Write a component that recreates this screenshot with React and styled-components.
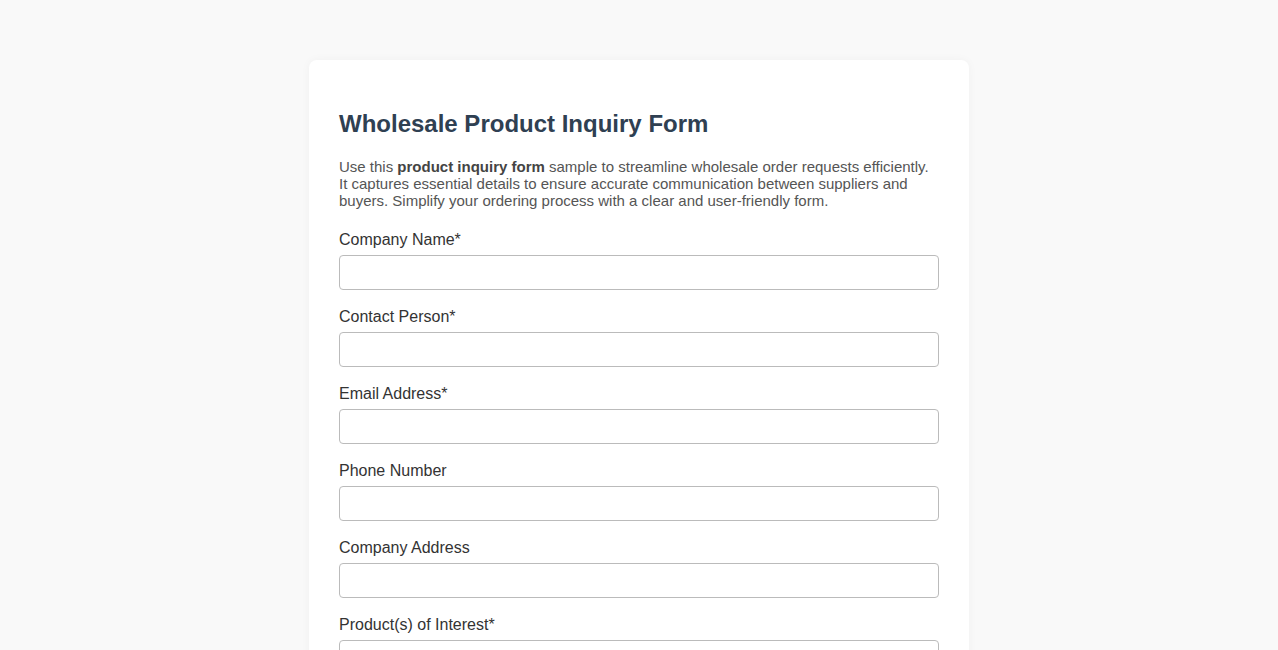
import React from 'react';
import styled, { createGlobalStyle } from 'styled-components';

const GlobalStyle = createGlobalStyle`
  body {
    margin: 0;
    background: #f9f9f9;
    font-family: "Liberation Sans", Arial, sans-serif;
  }
`;

const Page = styled.div`
  padding: 60px 0 40px;
`;

const Card = styled.div`
  width: 600px;
  margin: 0 auto;
  padding: 30px;
  background: #ffffff;
  border-radius: 8px;
  box-shadow: 0 0 10px rgba(0, 0, 0, 0.04);
`;

const Title = styled.h2`
  margin: 20px 0 20px;
  font-size: 24px;
  font-weight: bold;
  color: #2f4052;
`;

const Intro = styled.p`
  margin: 0 0 22px;
  font-size: 15px;
  color: #555555;

  strong {
    color: #444444;
  }
`;

const Group = styled.div`
  margin-bottom: 18px;
`;

const Label = styled.label`
  display: block;
  margin-bottom: 6px;
  font-size: 16px;
  color: #333333;
`;

const Input = styled.input`
  display: block;
  box-sizing: border-box;
  width: 100%;
  height: 35px;
  padding: 8px 10px;
  border: 1px solid #bbbbbb;
  border-radius: 4px;
  font-family: inherit;
  font-size: 15px;
  background: #ffffff;
`;

const fields = [
  { id: 'company', label: 'Company Name*', type: 'text' },
  { id: 'contact', label: 'Contact Person*', type: 'text' },
  { id: 'email', label: 'Email Address*', type: 'email' },
  { id: 'phone', label: 'Phone Number', type: 'tel' },
  { id: 'address', label: 'Company Address', type: 'text' },
  { id: 'products', label: 'Product(s) of Interest*', type: 'text' },
];

export default function App() {
  return (
    <Page>
      <GlobalStyle />
      <Card>
        <Title>Wholesale Product Inquiry Form</Title>
        <Intro>
          Use this <strong>product inquiry form</strong> sample to streamline wholesale order requests efficiently.
          It captures essential details to ensure accurate communication between suppliers and buyers.
          Simplify your ordering process with a clear and user-friendly form.
        </Intro>
        {fields.map((f) => (
          <Group key={f.id}>
            <Label htmlFor={f.id}>{f.label}</Label>
            <Input id={f.id} type={f.type} />
          </Group>
        ))}
      </Card>
    </Page>
  );
}
